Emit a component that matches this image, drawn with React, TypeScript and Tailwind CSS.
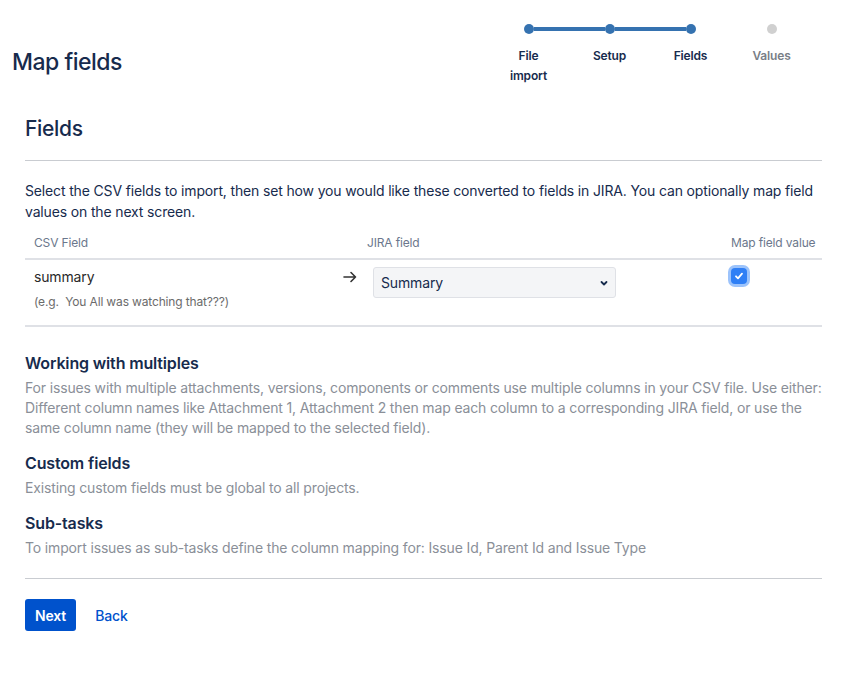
import React from "react";

const font = { fontFamily: "Inter, 'Noto Sans', 'Liberation Sans', sans-serif" };

function Stepper() {
  const steps = ["File import", "Setup", "Fields", "Values"];
  return (
    <div className="w-[324px] pt-[24px]">
      <div className="flex items-center px-[35.5px]">
        <span className="w-[10px] h-[10px] rounded-full bg-[#3572b0]" />
        <span className="w-[71px] h-[4px] bg-[#3572b0]" />
        <span className="w-[10px] h-[10px] rounded-full bg-[#3572b0]" />
        <span className="w-[71px] h-[4px] bg-[#3572b0]" />
        <span className="w-[10px] h-[10px] rounded-full bg-[#3572b0]" />
        <span className="w-[71px] h-[4px]" />
        <span className="w-[10px] h-[10px] rounded-full bg-[#d0d0d0]" />
      </div>
      <div className="grid grid-cols-4 mt-[12px]">
        {steps.map((s, i) => (
          <div
            key={s}
            className={`mx-auto max-w-[50px] text-center text-[12px] leading-[20px] font-semibold ${
              i === 3 ? "text-[#7a7f87]" : "text-[#172b4d]"
            }`}
          >
            {s}
          </div>
        ))}
      </div>
    </div>
  );
}

export default function App() {
  return (
    <div className="w-[858px] min-h-[676px] bg-white tracking-[-0.15px]" style={font}>
      <div className="flex justify-between pl-[12px] pr-[46px]">
        <h1 className="mt-[48px] text-[23px] leading-[28px] font-medium text-[#172b4d] tracking-[-0.5px]">
          Map fields
        </h1>
        <Stepper />
      </div>

      <div className="pl-[25px] w-[822px]">
        <h2 className="mt-[30px] text-[21px] leading-[26px] font-medium text-[#172b4d] tracking-[-0.3px]">Fields</h2>
        <div className="mt-[18px] h-px bg-[#c9ccd1]" />
        <p className="mt-[19px] text-[14px] leading-[21px] text-[#172b4d]">
          Select the CSV fields to import, then set how you would like these converted to fields in JIRA. You can
          optionally map field values on the next screen.
        </p>

        <div className="mt-[13px]">
          <div className="grid grid-cols-[309px_30px_359px_99px] border-b-2 border-[#dfe1e6] text-[12px] leading-[16px] text-[#6b778c] pb-[7px]">
            <div className="pl-[9px]">CSV Field</div>
            <div />
            <div className="pl-[3px]">JIRA field</div>
            <div className="pl-[8px]">Map field value</div>
          </div>
          <div className="grid grid-cols-[309px_30px_359px_99px] border-b-2 border-[#dfe1e6] pt-[6px] pb-[15px]">
            <div className="pl-[9px] pt-[1px]">
              <div className="text-[14px] leading-[20px] text-[#292929]">summary</div>
              <div className="mt-[7px] text-[12px] leading-[16px] text-[#6b6b6b]">
                (e.g.&nbsp; You All was watching that???)
              </div>
            </div>
            <div className="pl-[8px] pt-[3px]">
              <svg width="16" height="16" viewBox="0 0 16 16" fill="none" stroke="#333" strokeWidth="1.6" strokeLinecap="round" strokeLinejoin="round">
                <path d="M2 8h11.5M9 3.5L13.5 8 9 12.5" />
              </svg>
            </div>
            <div className="pl-[9px] pt-[1px]">
              <div className="w-[243px] h-[31px] flex items-center justify-between rounded-[3px] border border-[#dfe1e6] bg-[#f4f5f7] pl-[7px] pr-[6px]">
                <span className="text-[14px] text-[#172b4d]">Summary</span>
                <svg width="10" height="10" viewBox="0 0 10 10" fill="none" stroke="#172b4d" strokeWidth="1.8" strokeLinecap="round" strokeLinejoin="round">
                  <path d="M2.5 4l2.5 2.5L7.5 4" />
                </svg>
              </div>
            </div>
            <div className="pl-[8px] pt-[2px]">
              <span className="flex items-center justify-center w-[16px] h-[16px] rounded-[4px] bg-[#2f7ff5] ring-[3px] ring-[#9cc3fb]">
                <svg width="10" height="10" viewBox="0 0 10 10" fill="none" stroke="white" strokeWidth="1.8" strokeLinecap="round" strokeLinejoin="round">
                  <path d="M2 5.3l2 2 4-4.6" />
                </svg>
              </span>
            </div>
          </div>
        </div>

        <h3 className="mt-[26px] text-[16px] leading-[20px] font-semibold text-[#172b4d]">Working with multiples</h3>
        <p className="mt-[5px] text-[14px] leading-[20px] text-[#8a8f98]">
          For issues with multiple attachments, versions, components or comments use multiple columns in your CSV file.
          Use either: Different column names like Attachment 1, Attachment 2 then map each column to a corresponding
          JIRA field, or use the same column name (they will be mapped to the selected field).
        </p>
        <h3 className="mt-[15px] text-[16px] leading-[20px] font-semibold text-[#172b4d]">Custom fields</h3>
        <p className="mt-[5px] text-[14px] leading-[20px] text-[#8a8f98]">Existing custom fields must be global to all projects.</p>
        <h3 className="mt-[15px] text-[16px] leading-[20px] font-semibold text-[#172b4d]">Sub-tasks</h3>
        <p className="mt-[5px] text-[14px] leading-[20px] text-[#8a8f98]">
          To import issues as sub-tasks define the column mapping for: Issue Id, Parent Id and Issue Type
        </p>
        <div className="mt-[20px] h-px bg-[#c9ccd1]" />
        <div className="mt-[20px] flex items-center gap-[19px]">
          <button className="h-[32px] px-[10px] rounded-[3px] bg-[#0052cc] text-white text-[14px] font-semibold">Next</button>
          <a className="text-[14px] font-medium text-[#0052cc]">Back</a>
        </div>
      </div>
    </div>
  );
}
